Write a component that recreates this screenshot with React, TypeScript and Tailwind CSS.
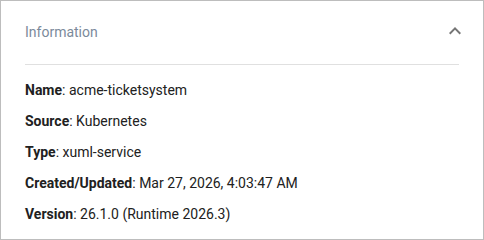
const rows = [
  { label: 'Name', value: 'acme-ticketsystem' },
  { label: 'Source', value: 'Kubernetes' },
  { label: 'Type', value: 'xuml-service' },
  { label: 'Created/Updated', value: 'Mar 27, 2026, 4:03:47 AM' },
  { label: 'Version', value: '26.1.0 (Runtime 2026.3)' },
]

export default function App() {
  return (
    <div className="w-[484px] h-[240px] bg-white border border-[#bdbdbd] font-['Roboto',sans-serif] text-[14px] text-[#212121] overflow-hidden">
      <div className="flex items-center justify-between h-[63px] pl-6 pr-4">
        <span className="text-[#7b8a9b] text-[14px]">Information</span>
        <svg width="24" height="24" viewBox="0 0 24 24" className="-mt-[4px] fill-[#757575]">
          <path d="M12 8l-6 6 1.41 1.41L12 10.83l4.59 4.58L18 14z" />
        </svg>
      </div>
      <div className="mx-6 h-px bg-[#e0e0e0]" />
      <div className="flex flex-col gap-[11px] pt-[15px] px-6">
        {rows.map((r) => (
          <div key={r.label} className="leading-5">
            <span className="font-bold">{r.label}</span>: {r.value}
          </div>
        ))}
      </div>
    </div>
  )
}
